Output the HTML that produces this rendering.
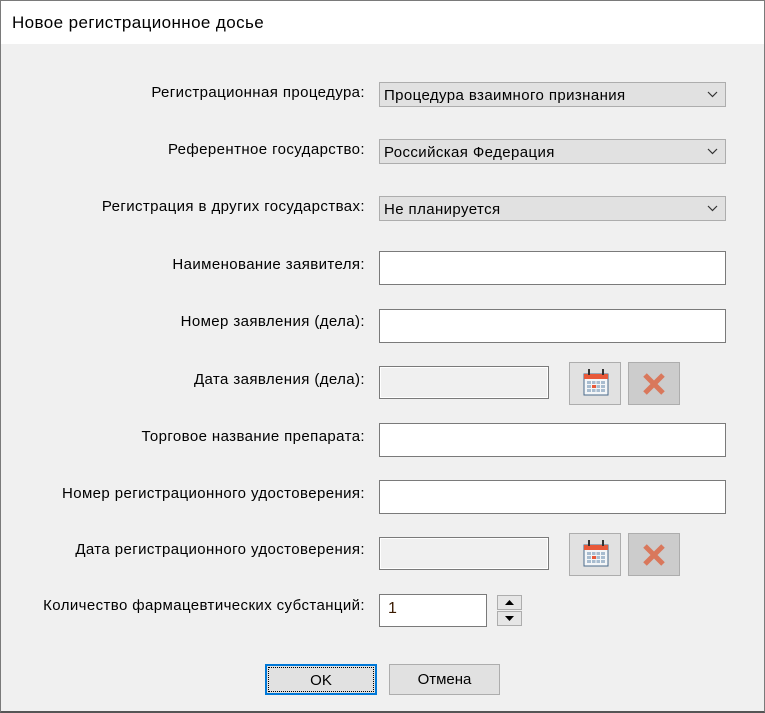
<!DOCTYPE html><html><head><meta charset="utf-8"><style>
*{box-sizing:border-box;margin:0;padding:0}
body{width:765px;height:713px;background:#f0f0f0;font-family:"Liberation Sans",sans-serif;font-size:14px;color:#000;position:relative;overflow:hidden}
.win{position:absolute;left:0;top:0;width:765px;height:713px;border:1px solid #7a7a7a;border-bottom:2px solid #555}
.title{position:absolute;left:1px;top:1px;width:763px;height:43px;background:#fff;font-size:17px;letter-spacing:0.4px;padding:12px 0 0 11px}
.lbl{position:absolute;right:400px;white-space:nowrap;font-size:15px;letter-spacing:0.4px;margin-top:2px}
.combo{position:absolute;left:379px;width:347px;height:25px;background:#e1e1e1;border:1px solid #adadad;padding:5px 0 0 4px;font-size:15px;letter-spacing:0.4px;line-height:16px}
.combo svg{position:absolute;right:7px;top:8px}
.tb{position:absolute;left:379px;width:347px;height:34px;background:#fff;border:1px solid #7a7a7a}
.db{position:absolute;left:379px;width:170px;height:33px;background:#f0f0f0;border:1px solid #7a7a7a;box-shadow:inset 0 0 0 1px #fff}
.btn{position:absolute;width:52px;height:43px;border:1px solid #adadad}
.pb{position:absolute;height:31px;background:#e1e1e1;border:1px solid #adadad;text-align:center;padding-top:6px;font-size:15px}
</style></head><body><div class="win"></div>
<div class="title">Новое регистрационное досье</div>
<div class="lbl" style="top:82px">Регистрационная процедура:</div>
<div class="lbl" style="top:139px">Референтное государство:</div>
<div class="lbl" style="top:196px">Регистрация в других государствах:</div>
<div class="lbl" style="top:254px">Наименование заявителя:</div>
<div class="lbl" style="top:311px">Номер заявления (дела):</div>
<div class="lbl" style="top:369px">Дата заявления (дела):</div>
<div class="lbl" style="top:426px">Торговое название препарата:</div>
<div class="lbl" style="top:483px">Номер регистрационного удостоверения:</div>
<div class="lbl" style="top:539px">Дата регистрационного удостоверения:</div>
<div class="lbl" style="top:595px">Количество фармацевтических субстанций:</div>
<div class="combo" style="top:82px">Процедура взаимного признания<svg width="11" height="7"><path d="M1 1l4.5 4.5L10 1" fill="none" stroke="#333" stroke-width="1.2"/></svg></div>
<div class="combo" style="top:139px">Российская Федерация<svg width="11" height="7"><path d="M1 1l4.5 4.5L10 1" fill="none" stroke="#333" stroke-width="1.2"/></svg></div>
<div class="combo" style="top:196px">Не планируется<svg width="11" height="7"><path d="M1 1l4.5 4.5L10 1" fill="none" stroke="#333" stroke-width="1.2"/></svg></div>
<div class="tb" style="top:251px"></div>
<div class="tb" style="top:309px"></div>
<div class="db" style="top:366px"></div>
<div class="tb" style="top:423px"></div>
<div class="tb" style="top:480px"></div>
<div class="db" style="top:537px"></div>
<div class="btn" style="left:569px;top:362px;background:#e1e1e1"><svg width="50" height="41"><rect x="14" y="11" width="24" height="21" fill="#f4f6f8" stroke="#4a6a8a"/><rect x="14" y="11" width="24" height="5" fill="#e8593a"/><rect x="18" y="6" width="2" height="6" fill="#333"/><rect x="32" y="6" width="2" height="6" fill="#333"/><rect x="17" y="18" width="18" height="11" fill="#a8bccf"/><path d="M17 21.5h18M17 25.5h18M21.5 18v11M26 18v11M30.5 18v11" stroke="#f4f6f8"/><rect x="22" y="22" width="4" height="3" fill="#e8593a"/></svg></div>
<div class="btn" style="left:628px;top:362px;background:#cccccc"><svg width="50" height="41"><path d="M16 12l18 18M34 12L16 30" stroke="#d9785c" stroke-width="5"/></svg></div>
<div class="btn" style="left:569px;top:533px;background:#e1e1e1"><svg width="50" height="41"><rect x="14" y="11" width="24" height="21" fill="#f4f6f8" stroke="#4a6a8a"/><rect x="14" y="11" width="24" height="5" fill="#e8593a"/><rect x="18" y="6" width="2" height="6" fill="#333"/><rect x="32" y="6" width="2" height="6" fill="#333"/><rect x="17" y="18" width="18" height="11" fill="#a8bccf"/><path d="M17 21.5h18M17 25.5h18M21.5 18v11M26 18v11M30.5 18v11" stroke="#f4f6f8"/><rect x="22" y="22" width="4" height="3" fill="#e8593a"/></svg></div>
<div class="btn" style="left:628px;top:533px;background:#cccccc"><svg width="50" height="41"><path d="M16 12l18 18M34 12L16 30" stroke="#d9785c" stroke-width="5"/></svg></div>
<div style="position:absolute;left:379px;top:594px;width:108px;height:33px;background:#fff;border:1px solid #7a7a7a;padding:5px 0 0 8px;font-size:16px;color:#3a1a00">1</div>
<div style="position:absolute;left:497px;top:595px;width:25px;height:15px;background:#e6e6e6;border:1px solid #adadad"><svg width="23" height="13"><path d="M7 9h9l-4.5-5z" fill="#000"/></svg></div>
<div style="position:absolute;left:497px;top:611px;width:25px;height:15px;background:#e6e6e6;border:1px solid #adadad"><svg width="23" height="13"><path d="M7 4h9l-4.5 5z" fill="#000"/></svg></div>
<div class="pb" style="left:265px;top:664px;width:112px;border:2px solid #0078d7;outline:1px dotted #000;outline-offset:-4px">OK</div>
<div class="pb" style="left:389px;top:664px;width:111px">Отмена</div>
</body></html>
